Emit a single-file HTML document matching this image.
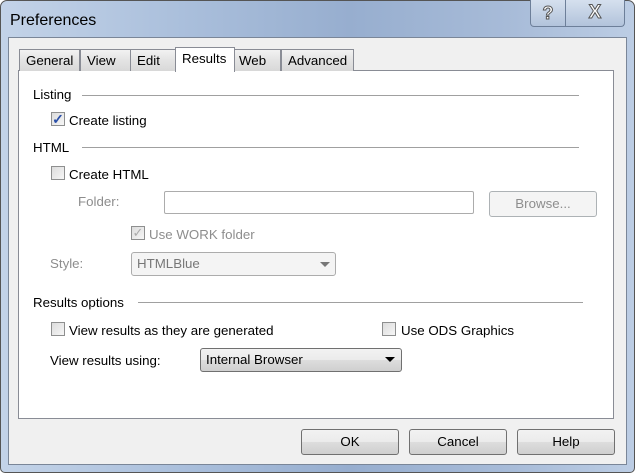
<!DOCTYPE html>
<html><head><style>
*{margin:0;padding:0;box-sizing:border-box}
body{width:635px;height:475px;overflow:hidden;background:#fff;font-family:"Liberation Sans",sans-serif;font-size:13.3px;color:#000;position:relative}
.a{position:absolute}
.win{left:0;top:0;width:635px;height:473px;border:1px solid #555;border-radius:7px 7px 5px 5px;background:linear-gradient(90deg,#c3d3e8 0%,#a9bedb 30%,#97aecf 55%,#a7bbd8 80%,#bccde4 100%)}
.client{left:8px;top:37px;width:619px;height:428px;background:#f0f0f0;border:1px solid #7a8698}
.panel{left:18px;top:70px;width:596px;height:349px;background:#fff;border:1px solid #898c95}
.tab{top:49px;height:22px;border:1px solid #898c95;border-bottom:none;background:linear-gradient(#f2f2f2,#e3e3e3 50%,#d8d8d8);padding:3px 0 0 6px}
.tabs{top:47px;height:25px;background:#fff;border:1px solid #898c95;border-bottom:none;padding:3px 0 0 6px;z-index:2}
.cb{width:14px;height:14px;border:1px solid #8e8f8f;background:linear-gradient(135deg,#dcdcdc,#f6f6f6)}
.line{height:1px;background:#a0a0a0}
.g{color:#8d8d8d}
.btn{height:26px;border:1px solid #707070;border-radius:3px;background:linear-gradient(#f2f2f2,#ebebeb 50%,#dddddd 51%,#cfcfcf);text-align:center;line-height:24px}
.combo{border:1px solid #acacac;border-radius:3px;padding:3px 0 0 5px}
.arr{width:0;height:0;border-left:5px solid transparent;border-right:5px solid transparent;border-top:5px solid #000}
</style></head><body>
<div class="a win"></div>
<div class="a" style="left:10px;top:12px;font-size:16px">Preferences</div>
<div class="a" style="left:530px;top:0;width:36px;height:27px;border:1px solid #6d7f99;border-top:none;border-radius:0 0 0 4px;background:linear-gradient(#d5e0ee,#b2c3db);text-align:center;font-weight:bold;font-size:18px;color:#fff;-webkit-text-stroke:1px #555;line-height:26px">?</div>
<div class="a" style="left:565px;top:0;width:60px;height:27px;border:1px solid #6d7f99;border-top:none;border-radius:0 0 4px 0;background:linear-gradient(#d5e0ee,#b2c3db);text-align:center;font-weight:bold;font-size:19px;color:#fff;-webkit-text-stroke:1px #555;line-height:26px">X</div>
<div class="a client"></div>
<div class="a panel"></div>
<div class="a tab" style="left:19px;width:61px">General</div>
<div class="a tab" style="left:80px;width:51px">View</div>
<div class="a tab" style="left:130px;width:46px">Edit</div>
<div class="a tabs" style="left:175px;width:60px">Results</div>
<div class="a tab" style="left:234px;width:47px;padding-left:4px">Web</div>
<div class="a tab" style="left:281px;width:73px">Advanced</div>

<div class="a" style="left:33px;top:87px">Listing</div>
<div class="a line" style="left:82px;top:95px;width:497px"></div>
<div class="a cb" style="left:51px;top:112px;font-size:14px;color:#2a4fa8;line-height:12px;text-align:center;font-weight:bold">✓</div>
<div class="a" style="left:69px;top:113px">Create listing</div>
<div class="a" style="left:33px;top:140px">HTML</div>
<div class="a line" style="left:82px;top:147px;width:497px"></div>
<div class="a cb" style="left:51px;top:166px"></div>
<div class="a" style="left:69px;top:167px">Create HTML</div>
<div class="a g" style="left:78px;top:194px">Folder:</div>
<div class="a" style="left:164px;top:191px;width:310px;height:23px;border:1px solid #acacac;border-radius:2px"></div>
<div class="a btn g" style="left:489px;top:191px;width:108px;border-color:#adb2b5;background:#f4f4f4;height:26px">Browse...</div>
<div class="a cb" style="left:131px;top:226px;color:#aaa;font-size:13px;line-height:12px;text-align:center">✓</div>
<div class="a g" style="left:149px;top:227px">Use WORK folder</div>
<div class="a g" style="left:50px;top:256px">Style:</div>
<div class="a combo g" style="left:131px;top:252px;width:205px;height:24px;background:#f4f4f4;color:#777">HTMLBlue</div>
<div class="a arr" style="left:320px;top:262px;border-top-color:#777"></div>
<div class="a" style="left:33px;top:295px">Results options</div>
<div class="a line" style="left:138px;top:302px;width:445px"></div>
<div class="a cb" style="left:51px;top:322px"></div>
<div class="a" style="left:69px;top:323px">View results as they are generated</div>
<div class="a cb" style="left:382px;top:322px"></div>
<div class="a" style="left:401px;top:323px">Use ODS Graphics</div>
<div class="a" style="left:50px;top:353px">View results using:</div>
<div class="a combo" style="left:200px;top:348px;width:202px;height:24px;border-color:#707070;background:linear-gradient(#f2f2f2,#ebebeb 50%,#dddddd 51%,#cfcfcf)">Internal Browser</div>
<div class="a arr" style="left:385px;top:357px"></div>

<div class="a btn" style="left:301px;top:429px;width:98px">OK</div>
<div class="a btn" style="left:409px;top:429px;width:98px">Cancel</div>
<div class="a btn" style="left:517px;top:429px;width:98px">Help</div>
</body></html>
